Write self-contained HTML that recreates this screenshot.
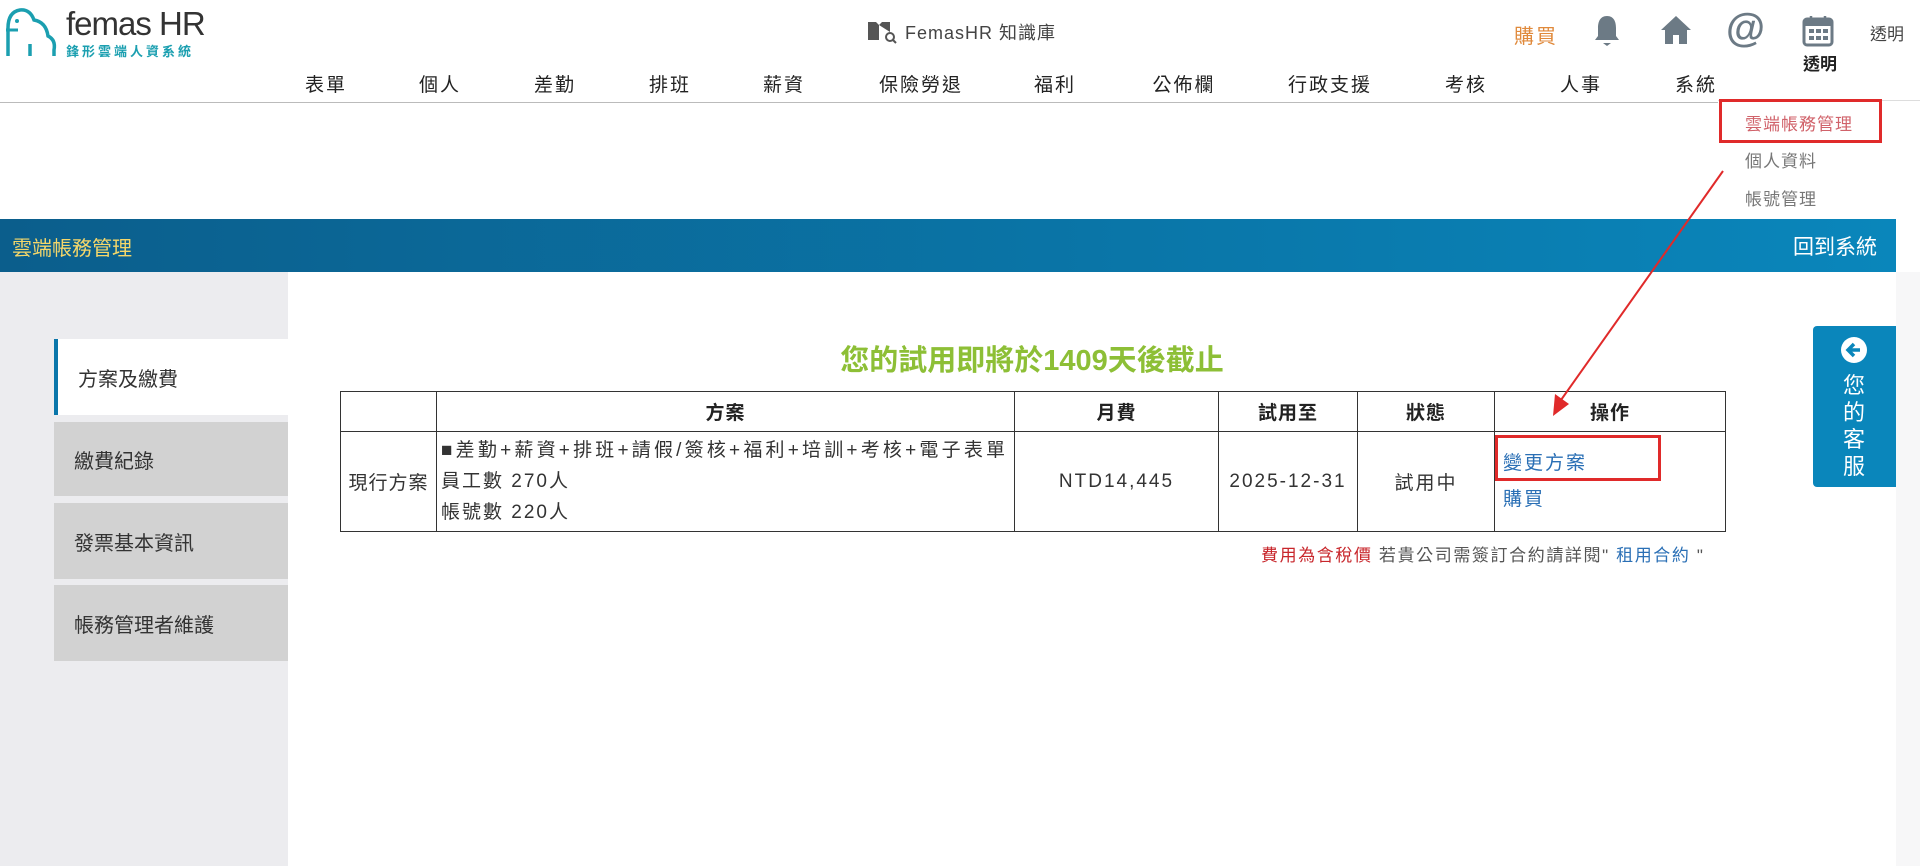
<!DOCTYPE html>
<html><head><meta charset="utf-8"><style>
*{margin:0;padding:0;box-sizing:border-box}
body{width:1920px;height:866px;position:relative;overflow:hidden;background:#fff;font-family:"Liberation Sans","Noto Sans CJK TC",sans-serif;color:#333}
.a{position:absolute;white-space:nowrap}
.nav{top:70px;font-size:19px;color:#222;letter-spacing:2px;transform:translateX(-50%)}
.tab{position:absolute;left:54px;width:234px;background:#d2d2d2;font-size:20px;color:#333;padding-left:20px;display:flex;align-items:center}
table{position:absolute;left:340px;top:391px;width:1386px;border-collapse:collapse;font-size:19px}
td,th{border:1.5px solid #333;text-align:center;font-weight:normal;letter-spacing:1px}
th{height:40px;font-weight:bold;color:#222}
</style></head><body>
<!-- logo -->
<svg class="a" style="left:2px;top:6px" width="60" height="52" viewBox="0 0 56 52"><path d="M4 50V22Q4 6 16 4Q26 3 30 14Q42 16 44 30Q52 34 50 44V50" fill="none" stroke="#1b9fb0" stroke-width="3.5"/><circle cx="13" cy="15" r="2" fill="#1b9fb0"/><path d="M26 38V50" stroke="#1b9fb0" stroke-width="3.5"/><path d="M2 24H14" stroke="#1b9fb0" stroke-width="3"/></svg>
<div class="a" style="left:66px;top:5px;font-size:33px;color:#333;letter-spacing:-1px">femas HR</div>
<div class="a" style="left:66px;top:41px;font-size:13px;color:#1b9fb0;letter-spacing:3px;font-weight:bold">鋒形雲端人資系統</div>
<!-- center -->
<svg class="a" style="left:866px;top:18px" width="32" height="26" viewBox="0 0 32 26"><path d="M2 4h8l3 3v15H2zM13 7l3-3h8v10" fill="#555"/><circle cx="24" cy="19" r="4" fill="none" stroke="#555" stroke-width="2"/><path d="M27 22l3 3" stroke="#555" stroke-width="2"/></svg>
<div class="a" style="left:905px;top:19px;font-size:18px;color:#444;letter-spacing:1px">FemasHR 知識庫</div>
<!-- top right -->
<div class="a" style="left:1514px;top:20px;font-size:20px;color:#e08a3c;letter-spacing:2px">購買</div>
<svg class="a" style="left:1592px;top:14px" width="30" height="34" viewBox="0 0 30 34"><path d="M15 2C8 2 6 8 6 14v8l-3 4h24l-3-4v-8c0-6-2-12-9-12z" fill="#6c7a85"/><path d="M11 29h8l-4 3z" fill="#6c7a85"/></svg>
<svg class="a" style="left:1659px;top:14px" width="34" height="32" viewBox="0 0 34 32"><path d="M17 2L2 16h4v14h8v-9h6v9h8V16h4z" fill="#6c7a85"/></svg>
<div class="a" style="left:1726px;top:6px;font-size:40px;font-weight:bold;color:#6c7a85">@</div>
<svg class="a" style="left:1801px;top:14px" width="34" height="34" viewBox="0 0 34 34"><rect x="3" y="5" width="28" height="26" rx="3" fill="none" stroke="#6c7a85" stroke-width="3"/><rect x="3" y="5" width="28" height="7" fill="#6c7a85"/><path d="M10 2v5M24 2v5" stroke="#6c7a85" stroke-width="2.5"/><g fill="#6c7a85"><rect x="8" y="15" width="5" height="4"/><rect x="15" y="15" width="5" height="4"/><rect x="22" y="15" width="5" height="4"/><rect x="8" y="22" width="5" height="4"/><rect x="15" y="22" width="5" height="4"/><rect x="22" y="22" width="5" height="4"/></g></svg>
<div class="a" style="left:1803px;top:50px;font-size:17px;color:#222;font-weight:bold">透明</div>
<div class="a" style="left:1870px;top:20px;font-size:17px;color:#444">透明</div>
<!-- nav -->
<div class="a nav" style="left:326px">表單</div>
<div class="a nav" style="left:440px">個人</div>
<div class="a nav" style="left:555px">差勤</div>
<div class="a nav" style="left:670px">排班</div>
<div class="a nav" style="left:784px">薪資</div>
<div class="a nav" style="left:921px">保險勞退</div>
<div class="a nav" style="left:1055px">福利</div>
<div class="a nav" style="left:1184px">公佈欄</div>
<div class="a nav" style="left:1330px">行政支援</div>
<div class="a nav" style="left:1466px">考核</div>
<div class="a nav" style="left:1581px">人事</div>
<div class="a nav" style="left:1696px">系統</div>
<div class="a" style="left:0;top:102px;width:1718px;height:1px;background:#bbb"></div>
<div class="a" style="left:1718px;top:100px;width:202px;height:1px;background:#ddd"></div>
<!-- dropdown -->
<div class="a" style="left:1745px;top:110px;font-size:17px;color:#d0626a;letter-spacing:1px">雲端帳務管理</div>
<div class="a" style="left:1719px;top:99px;width:163px;height:44px;border:3px solid #e02a2a"></div>
<div class="a" style="left:1745px;top:147px;font-size:17px;color:#777;letter-spacing:1px">個人資料</div>
<div class="a" style="left:1745px;top:185px;font-size:17px;color:#777;letter-spacing:1px">帳號管理</div>
<!-- blue bar -->
<div class="a" style="left:0;top:219px;width:1896px;height:53px;background:linear-gradient(90deg,#0b5e8c,#0a86bb)"></div>
<div class="a" style="left:12px;top:232px;font-size:20px;color:#f5d76a">雲端帳務管理</div>
<div class="a" style="left:1793px;top:231px;font-size:21px;color:#fff">回到系統</div>
<!-- left panel -->
<div class="a" style="left:0;top:272px;width:288px;height:594px;background:#ececef"></div>
<div class="a" style="left:1896px;top:272px;width:24px;height:594px;background:#f7f7f8"></div>
<div class="tab" style="top:339px;height:76px;background:#fff;border-left:4px solid #0a76aa">方案及繳費</div>
<div class="tab" style="top:422px;height:74px">繳費紀錄</div>
<div class="tab" style="top:503px;height:76px">發票基本資訊</div>
<div class="tab" style="top:585px;height:76px">帳務管理者維護</div>
<!-- title -->
<div class="a" style="left:1032px;top:337px;transform:translateX(-50%);font-size:29px;font-weight:bold;color:#8dbf36">您的試用即將於1409天後截止</div>
<table>
<tr><th style="width:96px"></th><th style="width:578px">方案</th><th style="width:204px">月費</th><th style="width:139px">試用至</th><th style="width:137px">狀態</th><th>操作</th></tr>
<tr style="height:100px"><td style="letter-spacing:1px">現行方案</td><td style="text-align:left;padding-left:4px;line-height:31px"><span style="letter-spacing:3.2px">■差勤+薪資+排班+請假/簽核+福利+培訓+考核+電子表單</span><br><span style="letter-spacing:2px">員工數 270人<br>帳號數 220人</span></td><td style="letter-spacing:2px">NTD14,445</td><td style="letter-spacing:2px">2025-12-31</td><td style="letter-spacing:2px">試用中</td><td style="text-align:left;padding-left:8px;color:#2a6fb5;line-height:36px;letter-spacing:2px">變更方案<br>購買</td></tr>
</table>
<div class="a" style="left:1495px;top:435px;width:166px;height:46px;border:3px solid #e02a2a"></div>
<div class="a" style="left:1261px;top:541px;font-size:17px;color:#555;letter-spacing:1.6px"><span style="color:#c8262b">費用為含稅價</span> 若貴公司需簽訂合約請詳閱" <span style="color:#2a6fb5">租用合約</span> "</div>
<!-- arrow -->
<svg class="a" style="left:0;top:0" width="1920" height="866"><path d="M1723 171L1561 400" stroke="#e02a2a" stroke-width="2"/><path d="M1553 416l2-22 14 10z" fill="#e02a2a"/></svg>
<!-- right tab -->
<div class="a" style="left:1813px;top:326px;width:83px;height:161px;background:#0a86bb;border-radius:4px 0 0 4px"></div>
<svg class="a" style="left:1840px;top:336px" width="28" height="28" viewBox="0 0 28 28"><circle cx="14" cy="14" r="13" fill="#fff"/><path d="M20 14H9M14 8l-6 6 6 6" stroke="#0a86bb" stroke-width="3.5" fill="none"/></svg>
<div class="a" style="left:1843px;top:372px;font-size:22px;color:#fff;line-height:27px;white-space:normal;width:24px">您的客服</div>
</body></html>
